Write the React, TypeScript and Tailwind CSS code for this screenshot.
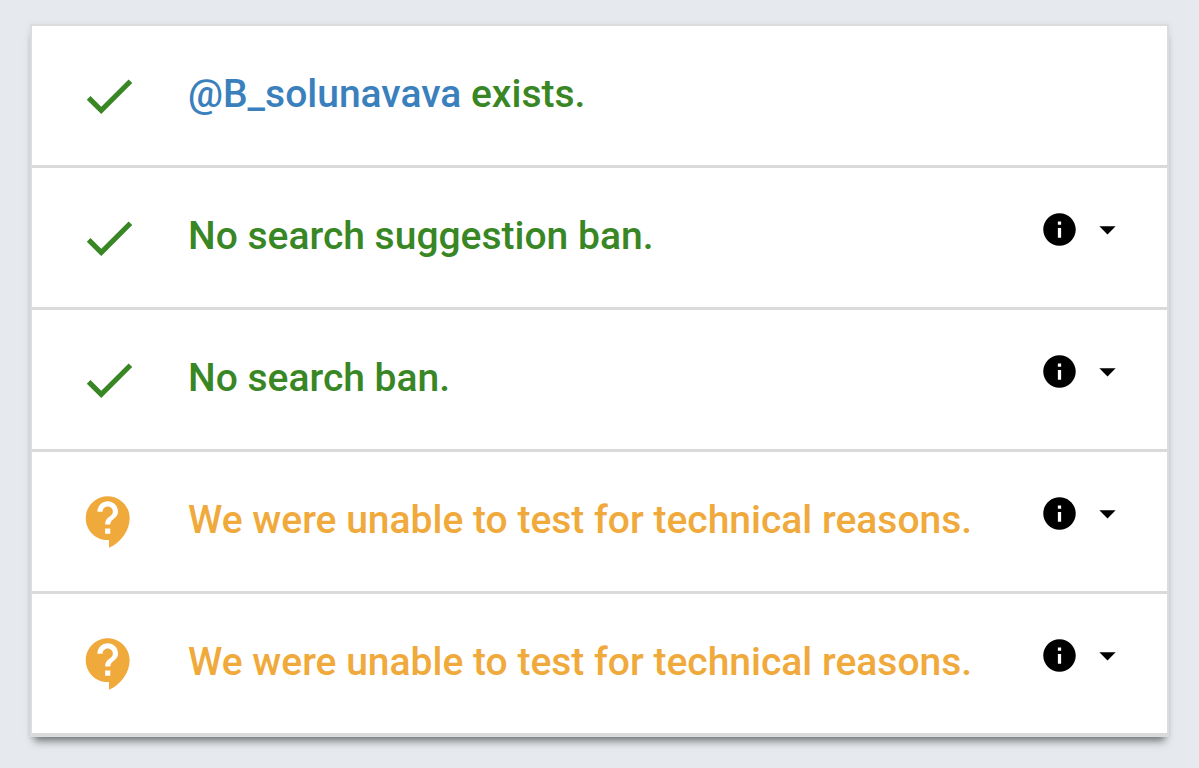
import React from 'react'
import { MdCheck, MdContactSupport, MdInfo, MdArrowDropDown } from 'react-icons/md'

interface TestResult {
  id: string
  status: 'ok' | 'unknown'
  handle?: string
  text: string
  expandable: boolean
}

const results: TestResult[] = [
  { id: 'exists', status: 'ok', handle: '@B_solunavava', text: 'exists.', expandable: false },
  { id: 'suggestion', status: 'ok', text: 'No search suggestion ban.', expandable: true },
  { id: 'search', status: 'ok', text: 'No search ban.', expandable: true },
  { id: 'ghost', status: 'unknown', text: 'We were unable to test for technical reasons.', expandable: true },
  { id: 'reply', status: 'unknown', text: 'We were unable to test for technical reasons.', expandable: true },
]

const ResultRow: React.FC<{ result: TestResult }> = ({ result }) => {
  const ok = result.status === 'ok'

  return (
    <li className="flex min-h-[142px] items-center border-b-3 border-[#dadada] pl-[46px] pr-10">
      {ok ? (
        <MdCheck className="size-[62px] shrink-0 text-[#388624]" />
      ) : (
        <MdContactSupport className="size-[62px] shrink-0 text-[#f0a93b]" />
      )}

      <p
        className={`flex-1 pl-12 pb-1 text-[39px] font-medium leading-[56px] ${
          ok ? 'text-[#388624]' : 'text-[#f0a93b]'
        }`}
      >
        {result.handle && (
          <>
            <a href="#profile" className="text-[#3a80bd]">{result.handle}</a>{' '}
          </>
        )}
        {result.text}
      </p>

      {result.expandable && (
        <button type="button" aria-label="Show details" className="flex items-center gap-[9px] pb-4 text-black">
          <MdInfo className="size-[39px]" />
          <MdArrowDropDown className="size-[39px]" />
        </button>
      )}
    </li>
  )
}

export default function App() {
  return (
    <main className="min-h-screen bg-[#e6eaee] px-[30px] pt-6 font-['Roboto',sans-serif]">
      <ul className="border-x-2 border-t-2 border-b border-[#dadcde] bg-white shadow-[0_8px_8px_-4px_rgba(0,0,0,0.5),0_0_6px_rgba(0,0,0,0.06)]">
        {results.map((result) => (
          <ResultRow key={result.id} result={result} />
        ))}
      </ul>
    </main>
  )
}
